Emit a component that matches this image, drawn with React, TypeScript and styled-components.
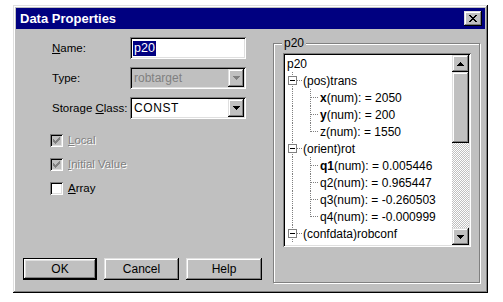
import React from 'react';
import styled, { createGlobalStyle, css } from 'styled-components';

const Global = createGlobalStyle`
  html, body { margin: 0; padding: 0; background: #fff; }
  body { font-family: "Liberation Sans", Arial, sans-serif; font-size: 12px; color: #000; }
  #root { padding: 5px 0 0 13px; }
`;

const raised = css`
  box-shadow: inset -1px -1px #000, inset 1px 1px #dfdfdf, inset -2px -2px #808080, inset 2px 2px #fff;
`;
const sunken = css`
  box-shadow: inset 1px 1px #808080, inset -1px -1px #fff, inset 2px 2px #000, inset -2px -2px #dfdfdf;
`;

const Window = styled.div`
  width: 475px;
  height: 288px;
  box-sizing: border-box;
  padding: 3px;
  background: #c0c0c0;
  ${raised}
  display: flex;
  flex-direction: column;
`;

const TitleBar = styled.div`
  height: 21px;
  flex: none;
  background: #000080;
  color: #fff;
  display: flex;
  align-items: center;
  justify-content: space-between;
  padding: 0 3px 0 4px;
  font-weight: bold;
  font-size: 13px;
`;

const CloseButton = styled.div`
  width: 18px;
  height: 15px;
  box-sizing: border-box;
  background: #c0c0c0;
  ${raised}
  display: flex;
  align-items: center;
  justify-content: center;
`;

const Body = styled.div`
  flex: 1;
  display: flex;
`;

const LeftPane = styled.div`
  width: 257px;
  box-sizing: border-box;
  display: flex;
  flex-direction: column;
  padding: 8px 0 10px 7px;
`;

const FormGrid = styled.div`
  margin-left: 29px;
  display: grid;
  grid-template-columns: 78px 116px;
  grid-auto-rows: 22px;
  row-gap: 8px;
  align-items: center;
`;

const Label = styled.span<{ $disabled?: boolean }>`
  white-space: nowrap;
  font-size: 11.5px;
  ${(p) => p.$disabled && css`color: #808080; text-shadow: 1px 1px #fff;`}
`;

const Field = styled.div<{ $disabled?: boolean }>`
  height: 22px;
  box-sizing: border-box;
  padding: 2px;
  background: ${(p) => (p.$disabled ? '#c0c0c0' : '#fff')};
  ${sunken}
  display: flex;
  align-items: center;
`;

const Selected = styled.span`
  margin-left: 1px;
  background: #000080;
  color: #fff;
  font-size: 12.5px;
  line-height: 15px;
  padding: 0 1px;
`;

const ComboText = styled.span<{ $disabled?: boolean; $mono?: boolean }>`
  flex: 1;
  padding-left: 2px;
  font-size: 12px;
  color: ${(p) => (p.$disabled ? '#808080' : '#000')};
  ${(p) => p.$mono && css`letter-spacing: 0.6px;`}
`;

const DropButton = styled.div`
  width: 16px;
  height: 18px;
  box-sizing: border-box;
  background: #c0c0c0;
  ${raised}
  display: flex;
  align-items: center;
  justify-content: center;
`;

const CheckList = styled.div`
  margin-top: 9px;
  display: flex;
  flex-direction: column;
`;

const CheckRow = styled.div`
  height: 24px;
  margin-left: 27px;
  display: flex;
  align-items: center;
  gap: 5px;
`;

const CheckBox = styled.div<{ $disabled?: boolean }>`
  width: 13px;
  height: 13px;
  box-sizing: border-box;
  background: ${(p) => (p.$disabled ? '#c0c0c0' : '#fff')};
  ${sunken}
  display: flex;
  align-items: center;
  justify-content: center;
`;

const ButtonRow = styled.div`
  margin-top: auto;
  display: flex;
  gap: 7px;
`;

const Button = styled.div<{ $w: number; $default?: boolean }>`
  width: ${(p) => p.$w}px;
  height: 22px;
  box-sizing: border-box;
  background: #c0c0c0;
  display: flex;
  align-items: center;
  justify-content: center;
  font-size: 12px;
  ${(p) =>
    p.$default
      ? css`box-shadow: inset 0 0 0 1px #000, inset -2px -2px #000, inset 2px 2px #fff, inset -3px -3px #808080, inset 3px 3px #dfdfdf;`
      : raised}
`;

const GroupBox = styled.div`
  position: relative;
  width: 207px;
  box-sizing: border-box;
  margin: 14px 0 7px 0;
  border: 1px solid #808080;
  box-shadow: inset 1px 1px #fff, 1px 1px #fff;
  padding: 9px 8px 35px 9px;
  display: flex;
`;

const Caption = styled.span`
  position: absolute;
  top: -8px;
  left: 8px;
  padding: 0 2px;
  background: #c0c0c0;
  font-size: 12px;
  line-height: 15px;
`;

const Tree = styled.div`
  flex: 1;
  box-sizing: border-box;
  padding: 2px;
  background: #fff;
  ${sunken}
  display: flex;
`;

const TreeContent = styled.div`
  flex: 1;
  overflow: hidden;
  display: flex;
  flex-direction: column;
`;

const Row = styled.div`
  height: 17px;
  flex: none;
  display: flex;
  align-items: center;
  padding-left: 1px;
  white-space: nowrap;
  font-size: 12px;
`;

const RootText = styled.span`
  padding-left: 1px;
`;

const Scrollbar = styled.div`
  width: 17px;
  flex: none;
  display: flex;
  flex-direction: column;
`;

const ScrollButton = styled.div<{ $h: number }>`
  height: ${(p) => p.$h}px;
  flex: none;
  box-sizing: border-box;
  background: #c0c0c0;
  ${raised}
  display: flex;
  align-items: center;
  justify-content: center;
`;

const Track = styled.div`
  flex: 1;
  background-image: conic-gradient(#fff 25%, #c0c0c0 0 50%, #fff 0 75%, #c0c0c0 0);
  background-size: 2px 2px;
`;

const Arrow = ({ up, color = '#000' }: { up?: boolean; color?: string }) => (
  <svg width="7" height="4" viewBox="0 0 7 4" shapeRendering="crispEdges">
    {up ? (
      <path d="M3 0h1v1h1v1h1v1h1v1H0V3h1V2h1V1h1z" fill={color} />
    ) : (
      <path d="M0 0h7v1H6v1H5v1H4v1H3V3H2V2H1V1H0z" fill={color} />
    )}
  </svg>
);

const CheckMark = ({ color }: { color: string }) => (
  <svg width="7" height="7" viewBox="0 0 7 7" shapeRendering="crispEdges">
    <path d="M6 0h1v3H6v1H5v1H4v1H3v1H2V6H1V5H0V2h1v1h1v1h1V3h1V2h1V1h1z" fill={color} />
  </svg>
);

const DOT = '#808080';

const Level1Guide = () => (
  <svg width="17" height="17" viewBox="0 0 17 17" shapeRendering="crispEdges">
    <line x1="6.5" y1="0" x2="6.5" y2="17" stroke={DOT} strokeDasharray="1 1" />
    <line x1="11" y1="8.5" x2="17" y2="8.5" stroke={DOT} strokeDasharray="1 1" />
    <rect x="2.5" y="4.5" width="8" height="8" fill="#fff" stroke={DOT} />
    <line x1="4" y1="8.5" x2="9" y2="8.5" stroke="#000" />
  </svg>
);

const Level2Guide = ({ last }: { last?: boolean }) => (
  <svg width="34" height="17" viewBox="0 0 34 17" shapeRendering="crispEdges">
    <line x1="6.5" y1="0" x2="6.5" y2="17" stroke={DOT} strokeDasharray="1 1" />
    <line x1="24.5" y1="0" x2="24.5" y2={last ? 9 : 17} stroke={DOT} strokeDasharray="1 1" />
    <line x1="25" y1="8.5" x2="32" y2="8.5" stroke={DOT} strokeDasharray="1 1" />
  </svg>
);

type Node = { level: 0 | 1 | 2; name?: string; bold?: boolean; text: string; last?: boolean };

const nodes: Node[] = [
  { level: 0, text: 'p20' },
  { level: 1, text: '(pos)trans' },
  { level: 2, name: 'x', bold: true, text: '(num): = 2050' },
  { level: 2, name: 'y', bold: true, text: '(num): = 200' },
  { level: 2, name: 'z', text: '(num): = 1550', last: true },
  { level: 1, text: '(orient)rot' },
  { level: 2, name: 'q1', bold: true, text: '(num): = 0.005446' },
  { level: 2, name: 'q2', text: '(num): = 0.965447' },
  { level: 2, name: 'q3', text: '(num): = -0.260503' },
  { level: 2, name: 'q4', text: '(num): = -0.000999', last: true },
  { level: 1, text: '(confdata)robconf' },
];

const Name = styled.span<{ $bold?: boolean }>`
  font-weight: ${(p) => (p.$bold ? 'bold' : 'normal')};
`;

export default function App() {
  return (
    <>
      <Global />
      <Window>
        <TitleBar>
          <span>Data Properties</span>
          <CloseButton>
            <svg width="8" height="7" viewBox="0 0 8 7" shapeRendering="crispEdges">
              <path d="M0 0h2v1h1v1h2V1h1V0h2v1H7v1H6v1H5v1h1v1h1v1h1v1H6V6H5V5H3v1H2v1H0V6h1V5h1V4h1V3H2V2H1V1H0z" fill="#000" />
            </svg>
          </CloseButton>
        </TitleBar>
        <Body>
          <LeftPane>
            <FormGrid>
              <Label><u>N</u>ame:</Label>
              <Field>
                <Selected>p20</Selected>
              </Field>
              <Label>Type:</Label>
              <Field $disabled>
                <ComboText $disabled>robtarget</ComboText>
                <DropButton>
                  <Arrow color="#808080" />
                </DropButton>
              </Field>
              <Label>Storage <u>C</u>lass:</Label>
              <Field>
                <ComboText $mono>CONST</ComboText>
                <DropButton>
                  <Arrow />
                </DropButton>
              </Field>
            </FormGrid>
            <CheckList>
              <CheckRow>
                <CheckBox $disabled>
                  <CheckMark color="#808080" />
                </CheckBox>
                <Label $disabled><u>L</u>ocal</Label>
              </CheckRow>
              <CheckRow>
                <CheckBox $disabled>
                  <CheckMark color="#808080" />
                </CheckBox>
                <Label $disabled><u>I</u>nitial Value</Label>
              </CheckRow>
              <CheckRow>
                <CheckBox />
                <Label><u>A</u>rray</Label>
              </CheckRow>
            </CheckList>
            <ButtonRow>
              <Button $w={74} $default>OK</Button>
              <Button $w={75}>Cancel</Button>
              <Button $w={76}>Help</Button>
            </ButtonRow>
          </LeftPane>
          <GroupBox>
            <Caption>p20</Caption>
            <Tree>
              <TreeContent>
                {nodes.map((n, i) => (
                  <Row key={i}>
                    {n.level === 0 && <RootText>{n.text}</RootText>}
                    {n.level === 1 && (
                      <>
                        <Level1Guide />
                        <span>{n.text}</span>
                      </>
                    )}
                    {n.level === 2 && (
                      <>
                        <Level2Guide last={n.last} />
                        <Name $bold={n.bold}>{n.name}</Name>
                        <span>{n.text}</span>
                      </>
                    )}
                  </Row>
                ))}
              </TreeContent>
              <Scrollbar>
                <ScrollButton $h={17}>
                  <Arrow up />
                </ScrollButton>
                <ScrollButton $h={71} />
                <Track />
                <ScrollButton $h={17}>
                  <Arrow />
                </ScrollButton>
              </Scrollbar>
            </Tree>
          </GroupBox>
        </Body>
      </Window>
    </>
  );
}
